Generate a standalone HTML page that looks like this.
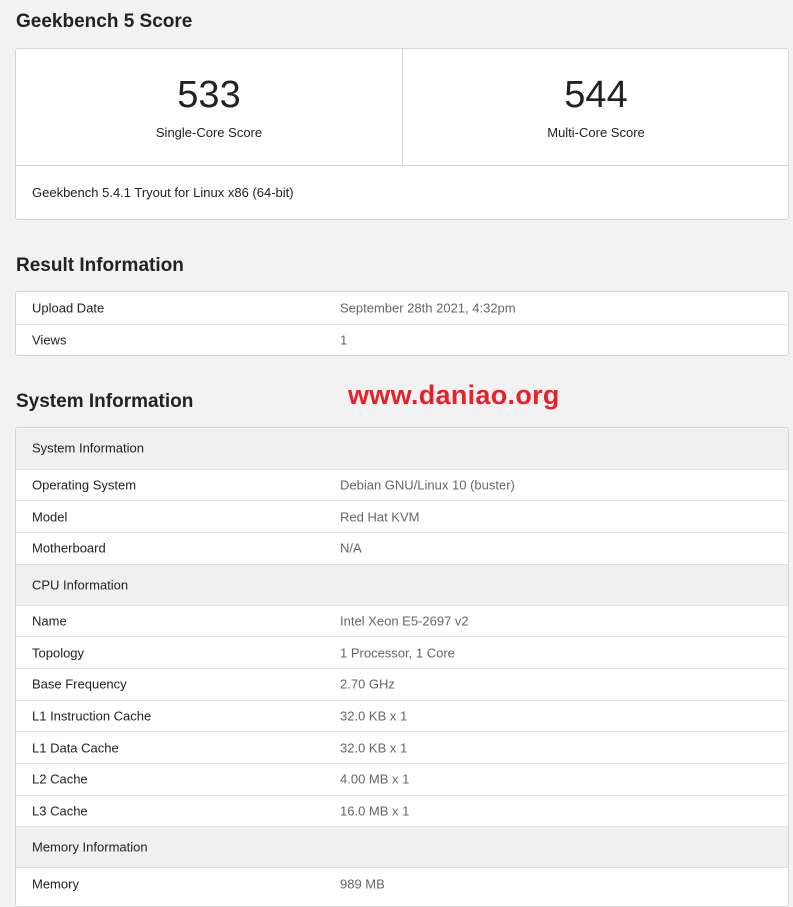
<!DOCTYPE html>
<html><head><meta charset="utf-8"><style>
*{margin:0;padding:0;box-sizing:border-box}
body{width:793px;height:898px;background:#f2f2f2;font-family:"Liberation Sans",Arial,sans-serif;color:#222;position:relative;overflow:hidden;font-size:13px}
.h{position:absolute;left:16px;font-size:19px;font-weight:bold;color:#222}
.card{position:absolute;left:15px;width:774px;background:#fff;border:1px solid #d6d6d6;border-radius:3px}
.row{position:relative;height:31.7px;border-top:1px solid #e2e2e2}
.row:first-child{border-top:none}
.row span{position:absolute;top:50%;transform:translateY(-50%);left:16px}
.row span.v{left:324px;color:#666}
.hd{height:41px;background:#f0f0f0;border-top:1px solid #e2e2e2}
.hd:first-child{border-top:none;height:40.5px}
.num{position:absolute;width:100%;text-align:center;font-size:38px;top:25px;color:#222}
.lab{position:absolute;width:100%;text-align:center;top:76px;font-size:13px}
</style></head><body>
<div class="h" style="top:11px">Geekbench 5 Score</div>
<div class="card" style="top:48px;height:172px">
 <div style="position:absolute;left:0;top:0;width:386px;height:117px"><div class="num">533</div><div class="lab">Single-Core Score</div></div>
 <div style="position:absolute;left:386px;top:0;width:1px;height:117px;background:#d6d6d6"></div>
 <div style="position:absolute;left:387px;top:0;width:386px;height:117px"><div class="num">544</div><div class="lab">Multi-Core Score</div></div>
 <div style="position:absolute;left:0;top:116px;width:100%;height:1px;background:#d6d6d6"></div>
 <div style="position:absolute;left:16px;top:136px">Geekbench 5.4.1 Tryout for Linux x86 (64-bit)</div>
</div>
<div class="h" style="top:255px">Result Information</div>
<div class="card" style="top:291px">
 <div class="row"><span>Upload Date</span><span class="v">September 28th 2021, 4:32pm</span></div>
 <div class="row"><span>Views</span><span class="v">1</span></div>
</div>
<div class="h" style="top:391px">System Information</div>
<div style="position:absolute;left:348px;top:380px;font-size:27px;font-weight:bold;color:#e8202a;letter-spacing:0.3px">www.daniao.org</div>
<div class="card" style="top:427px;height:480px">
 <div class="row hd"><span>System Information</span></div>
 <div class="row"><span>Operating System</span><span class="v">Debian GNU/Linux 10 (buster)</span></div>
 <div class="row"><span>Model</span><span class="v">Red Hat KVM</span></div>
 <div class="row"><span>Motherboard</span><span class="v">N/A</span></div>
 <div class="row hd"><span>CPU Information</span></div>
 <div class="row"><span>Name</span><span class="v">Intel Xeon E5-2697 v2</span></div>
 <div class="row"><span>Topology</span><span class="v">1 Processor, 1 Core</span></div>
 <div class="row"><span>Base Frequency</span><span class="v">2.70 GHz</span></div>
 <div class="row"><span>L1 Instruction Cache</span><span class="v">32.0 KB x 1</span></div>
 <div class="row"><span>L1 Data Cache</span><span class="v">32.0 KB x 1</span></div>
 <div class="row"><span>L2 Cache</span><span class="v">4.00 MB x 1</span></div>
 <div class="row"><span>L3 Cache</span><span class="v">16.0 MB x 1</span></div>
 <div class="row hd"><span>Memory Information</span></div>
 <div class="row"><span>Memory</span><span class="v">989 MB</span></div>
</div>
</body></html>
